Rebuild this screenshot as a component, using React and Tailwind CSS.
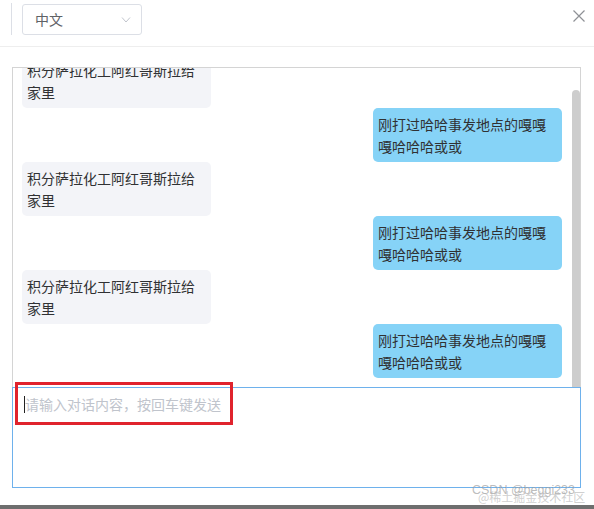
import React from "react";

const LEFT_TEXT = "积分萨拉化工阿红哥斯拉给家里";
const RIGHT_TEXT = "刚打过哈哈事发地点的嘎嘎嘎哈哈哈或或";

const messages = [
  { side: "left", text: LEFT_TEXT },
  { side: "right", text: RIGHT_TEXT },
  { side: "left", text: LEFT_TEXT },
  { side: "right", text: RIGHT_TEXT },
  { side: "left", text: LEFT_TEXT },
  { side: "right", text: RIGHT_TEXT },
];

const Bubble = ({ side, text }) => (
  <div className={`flex ${side === "right" ? "justify-end" : "justify-start"}`}>
    <div
      className={`w-[189px] rounded-[5px] px-[5px] py-[5px] text-[14px] leading-[22px] text-[#303133] ${
        side === "right" ? "bg-[#86d3f7]" : "bg-[#f3f4f8]"
      }`}
    >
      {text}
    </div>
  </div>
);

export default function App() {
  return (
    <div className="relative flex h-[509px] w-[594px] flex-col overflow-hidden bg-white font-['Noto_Sans_CJK_SC',sans-serif]">
      <div className="flex h-[505px] flex-col">
        {/* header */}
        <div className="flex h-[47px] shrink-0 items-start justify-between border-b border-[#eeeeee]">
          <div className="flex items-start">
            <div className="ml-[11px] mt-[3px] h-[32px] w-px bg-[#dcdfe6]" />
            <div className="ml-[10px] mt-[4px] flex h-[31px] w-[120px] items-center justify-between rounded-[3px] border border-[#dcdfe6] pl-[12px] pr-[10px]">
              <span className="text-[14px] text-[#606266]">中文</span>
              <svg width="10" height="6" viewBox="0 0 10 6" fill="none">
                <path d="M1 0.5 L5 5 L9 0.5" stroke="#c0c4cc" strokeWidth="1" />
              </svg>
            </div>
          </div>
          <svg
            className="mr-[9px] mt-[10px]"
            width="12"
            height="12"
            viewBox="0 0 12 12"
            fill="none"
          >
            <path d="M0.5 0.5 L11.5 11.5 M11.5 0.5 L0.5 11.5" stroke="#8f9196" strokeWidth="1.2" />
          </svg>
        </div>

        {/* chat area */}
        <div className="ml-[12px] mt-[20px] flex h-[320px] w-[569px] overflow-hidden border-l border-r border-t border-[#d4d4d4]">
          <div className="flex-1 overflow-hidden pl-[9px] pr-[10px]">
            <div className="mt-[-14px] flex flex-col">
              {messages.map((m, idx) => (
                <Bubble key={idx} side={m.side} text={m.text} />
              ))}
            </div>
          </div>
          <div className="flex w-[8px] flex-col">
            <div className="h-[22px]" />
            <div className="flex-1 rounded-t-[4px] bg-[#cdcdcd]" />
          </div>
        </div>

        {/* input */}
        <div className="ml-[12px] h-[101px] w-[569px] border border-[#6eb1ec] bg-white pl-[11px] pt-[6px]">
          <div className="flex items-center text-[14px] leading-[20px]">
            <span className="h-[17px] w-px bg-[#222222]" />
            <span className="text-[#c0c4cc]">请输入对话内容，按回车键发送</span>
          </div>
        </div>
      </div>

      <div className="h-[4px] w-full bg-[#6e6e6e]" />

      {/* annotation box */}
      <div className="absolute left-[15px] top-[382px] h-[43px] w-[218px] border-[3px] border-[#e0232d]" />

      {/* watermarks */}
      <div className="absolute left-[472px] top-[483px] whitespace-nowrap font-['Liberation_Sans',sans-serif] text-[12.5px] leading-[15px] text-[#a0a0a0]/70">
        CSDN @beggi233
      </div>
      <div className="absolute left-[478px] top-[489px] whitespace-nowrap text-[12px] leading-[15px] text-[#b0b0b0]/60">
        @稀土掘金技术社区
      </div>
    </div>
  );
}
